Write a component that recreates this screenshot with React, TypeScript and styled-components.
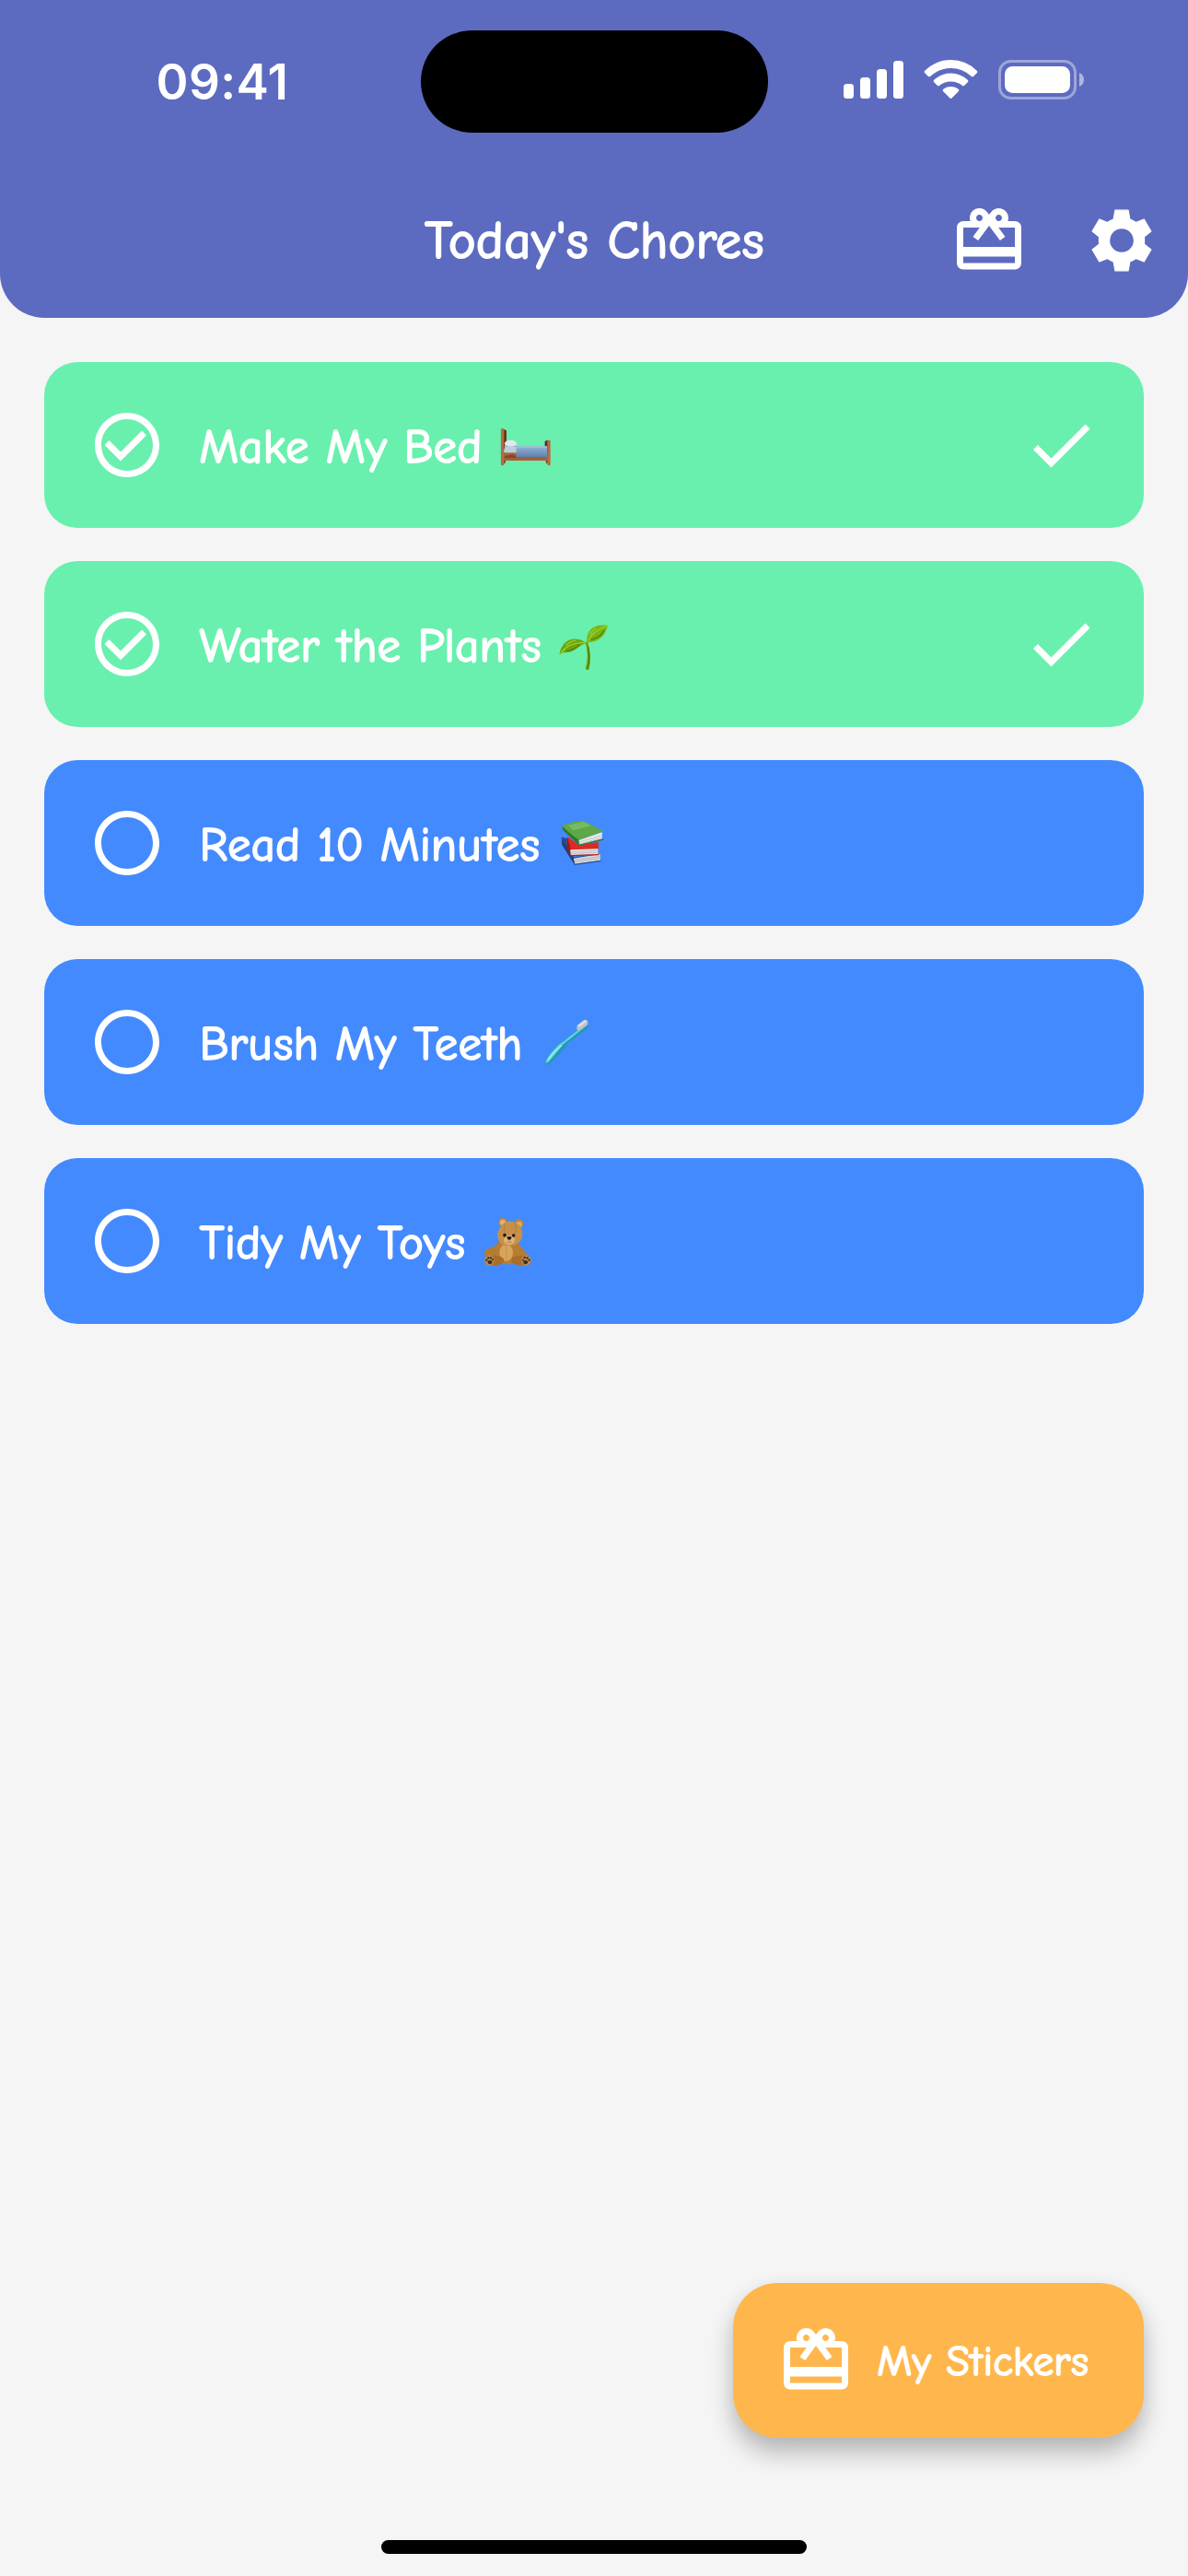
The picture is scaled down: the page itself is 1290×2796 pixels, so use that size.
import React from "react";
import styled, { createGlobalStyle } from "styled-components";
import { MdCheck, MdRedeem } from "react-icons/md";

const GlobalStyle = createGlobalStyle`
  * { box-sizing: border-box; }
  body { margin: 0; background: #f5f5f5; }
`;

const Screen = styled.div`
  width: 1290px;
  height: 2796px;
  display: flex;
  flex-direction: column;
  background: #f5f5f5;
  color: #fff;
  font-family: "Comic Neue", "Comic Sans MS", cursive;
  font-weight: 700;
  overflow: hidden;
`;

const Header = styled.header`
  height: 345px;
  flex: none;
  background: #5c6bc0;
  border-radius: 0 0 48px 48px;
`;

const StatusBar = styled.div`
  height: 177px;
  display: grid;
  grid-template-columns: 457px 377px 456px;
  align-items: start;
  padding-top: 33px;
`;

const Clock = styled.div`
  padding: 24px 0 0 26px;
  text-align: center;
  font: 600 53px/64px Inter, sans-serif;
  letter-spacing: 0.4px;
`;

const Island = styled.div`
  height: 111px;
  border-radius: 56px;
  background: #000;
`;

const StatusIcons = styled.div`
  display: flex;
  align-items: flex-start;
  padding: 32px 0 0 82px;
  svg { display: block; }
`;

const Signal = styled.svg`
  width: 65px;
  height: 43px;
  margin-right: 22px;
`;

const Wifi = styled.svg`
  width: 60px;
  height: 43px;
  margin-right: 21px;
`;

const Battery = styled.svg`
  width: 94px;
  height: 43px;
`;

const AppBar = styled.div`
  height: 168px;
  display: grid;
  grid-template-columns: 1fr auto 1fr;
  align-items: center;
  padding-right: 30px;
  padding-left: 30px;
`;

const Title = styled.h1`
  grid-column: 2;
  margin: 0;
  padding-top: 2px;
  font-size: 60px;
  line-height: 72px;
  font-weight: 700;
  letter-spacing: -0.96px;
  white-space: nowrap;
`;

const Actions = styled.nav`
  display: flex;
  justify-content: flex-end;
  gap: 60px;
`;

const IconButton = styled.button`
  width: 84px;
  height: 84px;
  padding: 0;
  border: 0;
  background: none;
  color: inherit;
  svg { display: block; width: 84px; height: 84px; }
`;

const ChoreList = styled.ul`
  list-style: none;
  margin: 0;
  padding: 48px;
  display: flex;
  flex-direction: column;
  gap: 36px;
  flex: 1;
`;

const ChoreCard = styled.li<{ $done: boolean }>`
  height: 180px;
  display: flex;
  align-items: center;
  padding: 0 48px;
  border-radius: 36px;
  background: ${(p) => (p.$done ? "#69f0ae" : "#448aff")};
  > svg { flex: none; width: 84px; height: 84px; }
`;

const ChoreLabel = styled.span`
  margin-left: 36px;
  font-size: 54px;
  line-height: 66px;
  letter-spacing: -0.95px;
  white-space: pre;
  padding-top: 6px;
`;

const Emoji = styled.svg`
  && { width: 64px; height: 60px; margin: 4px auto 0 16px; }
`;

const Bottom = styled.footer`
  display: flex;
  flex-direction: column;
  align-items: flex-end;
  height: 318px;
  flex: none;
`;

const StickersButton = styled.button`
  width: 446px;
  height: 168px;
  margin-right: 48px;
  padding: 0 0 0 48px;
  display: flex;
  align-items: center;
  gap: 24px;
  border: 0;
  border-radius: 48px;
  background: #ffb74d;
  color: #fff;
  font: inherit;
  font-size: 48px;
  line-height: 58px;
  letter-spacing: -0.93px;
  white-space: nowrap;
  box-shadow: 0 17px 27px rgba(0, 0, 0, 0.24), 0 2px 20px rgba(0, 0, 0, 0.05);
  svg { width: 84px; height: 84px; flex: none; }
  span { padding-top: 3px; }
`;

const HomeIndicator = styled.div`
  width: 462px;
  height: 15px;
  border-radius: 8px;
  background: #000;
  align-self: center;
  margin-top: 111px;
`;

const Gear = () => (
  <svg viewBox="18 12 252 252" fill="currentColor" stroke="currentColor" strokeWidth="4" strokeLinejoin="round">
    <path
      fillRule="evenodd"
      d="M123 39.5H165L170.500 69Q181 73 190 79.500L216.500 69L239.500 108L217 126Q218 138 217 150L239.500 168L216.500 207L190 196.500Q181 203 170.500 207L165 236.500H123L117.500 207Q107 203 98 196.500L71.500 207L48.500 168L71 150Q70 138 71 126L48.500 108L71.500 69L98 79.500Q107 73 117.500 69ZM144 97.500a40.500 40.500 0 1 0 0 81a40.500 40.500 0 1 0 0-81Z"
    />
  </svg>
);

const ChoreMark = ({ done }: { done: boolean }) => (
  <svg viewBox="0 0 24 24" fill="currentColor">
    <path
      fillRule="evenodd"
      d="M12 2C6.480 2 2 6.480 2 12s4.480 10 10 10 10-4.480 10-10S17.520 2 12 2zm0 18c-4.420 0-8-3.580-8-8s3.580-8 8-8 8 3.580 8 8-3.580 8-8 8z"
    />
    {done && <path d="M16.590 7.580L10 14.170l-3.590-3.580L5 12l5 5 8-8z" />}
  </svg>
);

const Bed = () => (
  <Emoji viewBox="1218 225 157 180" preserveAspectRatio="none" role="img" aria-label="bed">
    <defs>
      <linearGradient id="blanket" x1="0" y1="0" x2="0" y2="1">
        <stop offset="0" stopColor="#93b4d6" />
        <stop offset="1" stopColor="#5a7fac" />
      </linearGradient>
    </defs>
    <path d="M1237 257l8 5v60h-8z" fill="#6b3720" />
    <path d="M1347 298q2-5 8-5v62h-8z" fill="#5d2f1c" />
    <path d="M1236 333h122v27h-122z" fill="#a8623c" />
    <path d="M1240 345l20-5 20 8 30-5 42 5v4h-112z" fill="#8a4727" />
    <path d="M1237 360h5v8h-5zM1350 360h5v8h-5z" fill="#6b3720" />
    <rect x="1240" y="310" width="34" height="24" fill="#bccddd" />
    <ellipse cx="1256" cy="304" rx="16" ry="11" fill="#e0e7ef" />
    <path d="M1243 311q12 7 28 0v4h-28z" fill="#8798b0" />
    <rect x="1271" y="313" width="82" height="37" fill="url(#blanket)" />
    <path d="M1271 313h82v6h-82z" fill="#a2bcd5" />
    <rect x="1230" y="255" width="8" height="121" rx="3" fill="#b56b45" />
    <rect x="1354" y="293" width="8" height="83" rx="3" fill="#b56b45" />
  </Emoji>
);

const Seedling = () => (
  <Emoji viewBox="1379 213 157 180" preserveAspectRatio="none" role="img" aria-label="seedling">
    <path d="M1459 291q11 45 0 87 3 4 9 2 10-45-3-90z" fill="#6f9f0c" />
    <path d="M1466 305q6 38 0 74" stroke="#4c7706" strokeWidth="2.500" fill="none" />
    <path d="M1463 292C1461 253 1478 232 1519 236 1511 270 1497 291 1463 292Z" fill="#78b512" />
    <path d="M1390 331C1395 289 1425 264 1463 294 1442 298 1431 329 1402 324Z" fill="#6da40f" />
    <path d="M1467 286q10-30 50-49M1393 327q23-37 66-34" stroke="#a5d42f" strokeWidth="3" fill="none" />
    <path d="M1474 283q25-6 35-30M1408 320q20-3 35-21" stroke="#4f8508" strokeWidth="4" fill="none" />
    <path d="M1471 268q3-14 17-22M1407 302q12-15 28-17" stroke="#8dc722" strokeWidth="5" fill="none" />
  </Emoji>
);

const Books = () => (
  <Emoji viewBox="1374 201 157 180" preserveAspectRatio="none" role="img" aria-label="books">
    <path d="M1393 265l16 6 16 60 72-11-1 6-68 26z" fill="#2e4c91" />
    <path d="M1393 266l33 68 2 23-34-66z" fill="#283f76" />
    <path d="M1425 335l71-14v21l-67 11z" fill="#d9dbe0" />
    <path d="M1427 341l69-12M1428 347l68-12" stroke="#a3a7b1" strokeWidth="2" />
    <path d="M1427 353l71-12v4l-71 12z" fill="#304f93" />
    <path d="M1408 263l31 29 52-10 1 22-76 4z" fill="#dd2a23" />
    <path d="M1408 264l10 42-1 19-9-20z" fill="#9b1b19" />
    <path d="M1416 307l74-3v18l-72 3z" fill="#e6e4e2" />
    <path d="M1417 313l71-3M1417 319l71-3" stroke="#b3b0ad" strokeWidth="2" />
    <path d="M1416 324l76-3v4l-74 3z" fill="#b91f1d" />
    <path d="M1394 230l44 43 3 21-44-50z" fill="#2d7b22" />
    <path d="M1439 275l62-25v21l-60 19z" fill="#eceae8" />
    <path d="M1440 282l60-22M1441 288l60-21" stroke="#b9b7b4" strokeWidth="2" />
    <path d="M1394 228q28-13 58-16l53 35-65 28q-24-18-46-47z" fill="#5ea84a" />
    <path d="M1410 227l40-12 22 14-48 15z" fill="#83c46c" opacity=".65" />
    <path d="M1439 290l67-19-1 4-65 19z" fill="#357f29" />
  </Emoji>
);

const Toothbrush = () => (
  <Emoji viewBox="1325 219 157 180" preserveAspectRatio="none" role="img" aria-label="toothbrush">
    <path d="M1347 375C1344 360 1370 323 1389 304 1402 297 1403 292 1412 285L1456 237 1463 246 1460 258 1417 299C1406 306 1404 314 1399 322 1387 339 1368 367 1356 377Z" fill="#2398b8" />
    <path d="M1348 371C1349 355 1372 323 1389 306 1402 298 1404 291 1413 284L1457 242 1458 249 1415 292C1403 302 1399 308 1393 314 1379 335 1363 360 1353 371Z" fill="#5fd0dc" />
    <path d="M1354 362q15-27 36-48" stroke="#a5efee" strokeWidth="3.500" fill="none" />
    <path d="M1432 249l20-19 8 3 1 13-24 20-6-4z" fill="#bfc1c3" />
    <path d="M1434 248l18-16 7 3-20 19z" fill="#dedede" />
  </Emoji>
);

const Teddy = () => (
  <Emoji viewBox="18 27 192 180" role="img" aria-label="teddy bear">
    <path d="M80 113Q66 133 39 138 27 148 37 161 62 165 84 145zM140 118Q159 135 171 152 175 166 161 168 139 160 133 145z" fill="#b57b32" />
    <ellipse cx="109" cy="147" rx="41" ry="40" fill="#b97d32" />
    <ellipse cx="104" cy="149" rx="22" ry="28" fill="#d6a45b" />
    <ellipse cx="67" cy="174" rx="30" ry="16" fill="#ab6d27" />
    <ellipse cx="149" cy="174" rx="30" ry="16" fill="#ab6d27" />
    <circle cx="93" cy="50" r="14" fill="#c0863b" />
    <circle cx="145" cy="55" r="15" fill="#c0863b" />
    <circle cx="93" cy="51" r="9" fill="#dfb672" />
    <circle cx="146" cy="57" r="9" fill="#dcae67" />
    <path d="M83 70Q94 45 122 47 151 51 156 79 161 111 137 122 114 130 91 122 75 111 75 91 76 80 83 70Z" fill="#c6904a" />
    <path d="M100 53Q95 70 99 87M132 51Q140 70 132 89" stroke="#a56e2d" strokeWidth="1.500" fill="none" />
    <path d="M104 125v50" stroke="#b47f3b" strokeWidth="1.500" />
    <ellipse cx="114" cy="108" rx="18" ry="15" fill="#e0b677" />
    <circle cx="99" cy="92" r="5.500" fill="#251b17" />
    <circle cx="128" cy="93" r="5.500" fill="#251b17" />
    <path d="M106 98q8-4 16 0-1 9-8 10-7-1-8-10z" fill="#251b17" />
    <path d="M114 107v6m-9 0q9 7 18 0" stroke="#9d6c35" strokeWidth="2" fill="none" />
    <ellipse cx="49" cy="174" rx="16" ry="17" fill="#b98a4a" />
    <ellipse cx="169" cy="174" rx="16" ry="17" fill="#b98a4a" />
    <g fill="#3a2a1e">
      <ellipse cx="51" cy="180" rx="7.500" ry="6" />
      <circle cx="40" cy="173" r="3.500" />
      <circle cx="46" cy="166" r="3.500" />
      <circle cx="54" cy="166" r="3.500" />
      <circle cx="60" cy="172" r="3" />
      <ellipse cx="167" cy="180" rx="7.500" ry="6" />
      <circle cx="159" cy="173" r="3" />
      <circle cx="164" cy="165" r="3.500" />
      <circle cx="173" cy="166" r="3.500" />
      <circle cx="179" cy="173" r="3.500" />
    </g>
  </Emoji>
);

const chores = [
  { label: "Make My Bed", done: true, Picture: Bed },
  { label: "Water the Plants", done: true, Picture: Seedling },
  { label: "Read 10 Minutes", done: false, Picture: Books },
  { label: "Brush My Teeth", done: false, Picture: Toothbrush },
  { label: "Tidy My Toys", done: false, Picture: Teddy },
];

export default function App() {
  return (
    <Screen>
      <GlobalStyle />
      <Header>
        <StatusBar>
          <Clock>09:41</Clock>
          <Island />
          <StatusIcons>
            <Signal viewBox="0 0 65 43" fill="#fff">
              <rect x="0" y="26" width="11" height="16" rx="3.500" />
              <rect x="18" y="19" width="11" height="23" rx="3.500" />
              <rect x="36" y="10" width="11" height="32" rx="3.500" />
              <rect x="54" y="1" width="11" height="41" rx="3.500" />
            </Signal>
            <Wifi viewBox="0 0 60 43" fill="#fff">
              <path d="M1 12Q13 0 29.500 0T58 12Q58.600 13.200 58 14L54 18Q53 18.600 52 18Q42 9 29.500 9T7 18Q6 18.600 5 18L1 14Q.400 13.200 1 12Z" />
              <path d="M11 22Q19 14.500 29.500 14.500T48 22Q48.600 23.200 48 24L44 28Q43 28.600 42 28Q37 23.500 29.500 23.500T17 28Q16 28.600 15 28L11 24Q10.400 23.200 11 22Z" />
              <path d="M21 32Q24.500 29 29.500 29T38 32Q38.600 33.200 38 34L30.500 41.500Q29.500 42.500 28.500 41.500L21 34Q20.400 33.200 21 32Z" />
            </Wifi>
            <Battery viewBox="0 0 94 43">
              <rect x="1.500" y="1.500" width="82" height="40" rx="12" fill="none" stroke="#fff" strokeWidth="3" opacity=".4" />
              <rect x="7" y="7" width="71" height="29" rx="8.500" fill="#fff" />
              <path d="M88 14q5 2 5 7.500T88 29z" fill="#fff" opacity=".5" />
            </Battery>
          </StatusIcons>
        </StatusBar>
        <AppBar>
          <Title>Today's Chores</Title>
          <Actions>
            <IconButton aria-label="Rewards"><MdRedeem /></IconButton>
            <IconButton aria-label="Settings"><Gear /></IconButton>
          </Actions>
        </AppBar>
      </Header>
      <ChoreList>
        {chores.map(({ label, done, Picture }) => (
          <ChoreCard key={label} $done={done}>
            <ChoreMark done={done} />
            <ChoreLabel>{label}</ChoreLabel>
            <Picture />
            {done && <MdCheck />}
          </ChoreCard>
        ))}
      </ChoreList>
      <Bottom>
        <StickersButton>
          <MdRedeem />
          <span>My Stickers</span>
        </StickersButton>
        <HomeIndicator />
      </Bottom>
    </Screen>
  );
}
